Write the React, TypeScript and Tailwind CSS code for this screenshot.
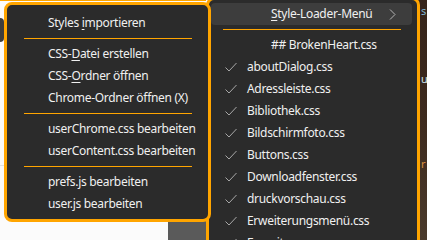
import { ReactNode } from 'react';

const FONT = "font-['Segoe_UI','Noto_Sans',sans-serif]";

function Sep({ className }: { className: string }) {
  return <div className={`h-px bg-[#ffa500] my-[4px] ${className}`} />;
}

function Check() {
  return (
    <svg width="12" height="10" viewBox="0 0 12 10" className="shrink-0">
      <path d="M0.5 5.5 L4 9 L11.5 1" fill="none" stroke="#a8a8a8" strokeWidth="1" />
    </svg>
  );
}

function LeftItem({ children }: { children: ReactNode }) {
  return <div className="h-[22px] flex items-center pl-[41px] whitespace-nowrap">{children}</div>;
}

function U({ children }: { children: ReactNode }) {
  return <span className="underline underline-offset-[2px] decoration-1">{children}</span>;
}

const STYLES = [
  'aboutDialog.css',
  'Adressleiste.css',
  'Bibliothek.css',
  'Bildschirmfoto.css',
  'Buttons.css',
  'Downloadfenster.css',
  'druckvorschau.css',
  'Erweiterungsmenü.css',
  'Favoriten.css',
];

export default function App() {
  return (
    <div className={`relative w-[427px] h-[240px] overflow-hidden bg-[#fbfbfb] text-[12px] tracking-[-0.3px] text-[#f0f0f0] ${FONT}`}>
      {/* page behind the menus */}
      <div className="absolute left-0 top-0 w-[206px] h-px bg-[#ffa500]" />
      <div className="absolute left-0 top-[18px] w-[8px] h-[24px] -ml-[4px] rounded-full bg-[#3c3c3c]" />
      <div className="absolute left-0 top-[165px] w-[10px] h-px bg-[#e2e2e2]" />
      <div className="absolute left-[168px] top-[221px] w-[40px] h-[19px] bg-[#5a5a5a]" />
      <div className="absolute left-[418px] top-0 w-[9px] h-[240px] overflow-hidden bg-gradient-to-b from-[#35241a] via-[#3d2a1e] to-[#4a3a2c] text-[11px] leading-none">
        <span className="absolute left-[3px] top-[5px] text-[#7fb6d6]">s</span>
        <span className="absolute left-[3px] top-[73px] text-[#cfe4f0]">u</span>
        <span className="absolute left-[3px] top-[158px] text-[#d89040]">r</span>
      </div>

      {/* submenu: Style-Loader */}
      <div className="absolute left-[206px] top-[-3px] w-[214px] h-[260px] border-[3px] border-[#ffa500] rounded-[8px] bg-[#2b2b2b] pt-[3px]">
        <div className="relative ml-[2px] w-[201px] h-[22px] rounded-[4px] bg-[#3d3d3d] flex items-center pl-[60px] whitespace-nowrap">
          <span><U>S</U>tyle-Loader-Menü</span>
          <svg width="7" height="11" viewBox="0 0 7 11" className="absolute left-[178px] top-[6px]">
            <path d="M1 0.5 L6 5.5 L1 10.5" fill="none" stroke="#b4b4b4" strokeWidth="1" />
          </svg>
        </div>
        <Sep className="ml-[14px] w-[178px]" />
        <div className="h-[22px] flex items-center pl-[62px] whitespace-nowrap">## BrokenHeart.css</div>
        {STYLES.map((s) => (
          <div key={s} className="h-[22px] flex items-center pl-[16px] gap-[10px] whitespace-nowrap">
            <Check />
            <span>{s}</span>
          </div>
        ))}
      </div>

      {/* main menu */}
      <div className="absolute left-[4px] top-[2px] w-[207px] h-[220px] border-[3px] border-[#ffa500] rounded-[8px] bg-[#2b2b2b] pt-[7px]">
        <LeftItem>Styles&nbsp;<U>i</U>mportieren</LeftItem>
        <Sep className="ml-[17px] w-[168px]" />
        <LeftItem>CSS-<U>D</U>atei erstellen</LeftItem>
        <LeftItem>CSS-<U>O</U>rdner öffnen</LeftItem>
        <LeftItem>Chrome-Ordner öffnen (X)</LeftItem>
        <Sep className="ml-[17px] w-[168px]" />
        <LeftItem>userChrome.css bearbeiten</LeftItem>
        <LeftItem>userContent.css bearbeiten</LeftItem>
        <Sep className="ml-[17px] w-[168px]" />
        <LeftItem>prefs.js bearbeiten</LeftItem>
        <LeftItem>user.js bearbeiten</LeftItem>
      </div>
    </div>
  );
}
